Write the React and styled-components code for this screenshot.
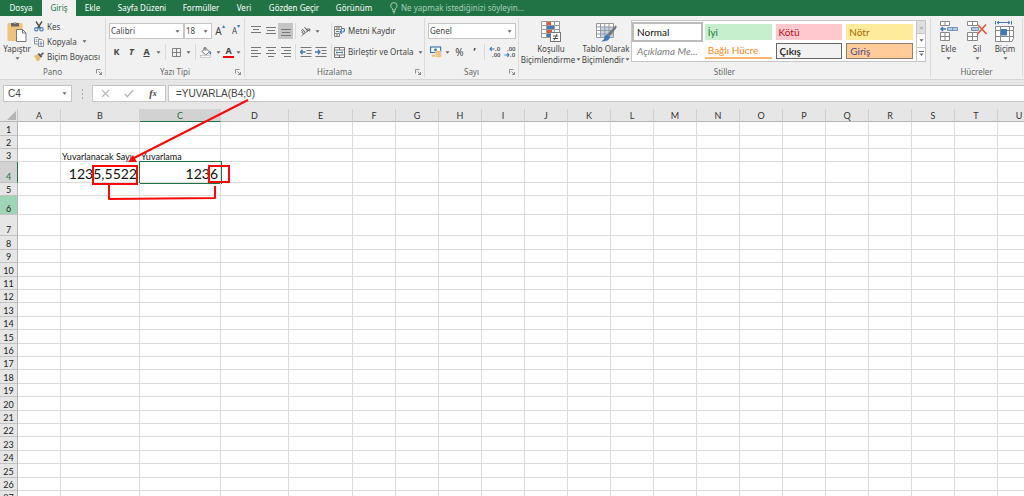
import React from "react";
import styled, { createGlobalStyle } from "styled-components";

const TABS = [
  { name: "Dosya", width: 42 },
  { name: "Giriş", width: 34, active: true },
  { name: "Ekle", width: 33 },
  { name: "Sayfa Düzeni", width: 66 },
  { name: "Formüller", width: 52 },
  { name: "Veri", width: 34 },
  { name: "Gözden Geçir", width: 66 },
  { name: "Görünüm", width: 54 },
];

const STYLES = [
  { name: "Normal", kind: "normal" },
  { name: "İyi", kind: "good" },
  { name: "Kötü", kind: "bad" },
  { name: "Nötr", kind: "neutral" },
  { name: "Açıklama Me...", kind: "note" },
  { name: "Bağlı Hücre", kind: "linked" },
  { name: "Çıkış", kind: "output" },
  { name: "Giriş", kind: "input" },
];

const COLUMNS = "ABCDEFGHIJKLMNOPQRSTU".split("");
const COLUMN_WIDTHS = { B: 79, C: 81, D: 68, E: 64 };
const ROW_HEIGHTS = { 1: 14, 4: 21, 6: 19, 7: 21 };
const ROWS = Array.from({ length: 27 }, (_, i) => i + 1);

const CELLS = {
  B3: "Yuvarlanacak Sayı",
  C3: "Yuvarlama",
  B4: "1235,5522",
  C4: "1236",
};

const rowHeight = (n) =>
  ROW_HEIGHTS[n] || (n > 7 && (n % 5 === 0 || n % 5 === 3) ? 14 : 13);

const Arrow = () => (
  <ArrowSvg viewBox="0 0 5 3" aria-hidden="true">
    <path d="M0.5 0.3h4L2.5 2.8z" fill="#666" />
  </ArrowSvg>
);

const Launcher = () => (
  <LaunchButton aria-label="Diğer seçenekler">
    <svg width="6" height="6" viewBox="0 0 6 6" fill="none" stroke="#777">
      <path d="M0.5 4.5v-4h4M2.5 2.5l3 3M5.5 3v2.5H3" strokeWidth="0.8" />
    </svg>
  </LaunchButton>
);

const PasteIcon = () => (
  <svg width="20" height="22" viewBox="0 0 20 22">
    <rect x="0.5" y="2" width="15" height="18" rx="1" fill="#eec47c" />
    <path d="M4 2h2.5a1.6 1.6 0 0 1 3 0H12v3.5H4z" fill="#666" />
    <circle cx="8" cy="2" r="0.8" fill="#eee" />
    <path d="M9.5 8.5h6l3.5 3.5v8.5H9.5z" fill="#fff" stroke="#777" />
    <path d="M15.5 8.5V12H19" fill="none" stroke="#777" />
  </svg>
);

const CutIcon = () => (
  <svg width="10" height="11" viewBox="0 0 10 11" fill="none">
    <path d="M2 0.5l4.5 7M8 0.5L3.5 7.5" stroke="#555" strokeWidth="1.4" />
    <circle cx="2.3" cy="8.3" r="1.7" stroke="#3f7ab8" strokeWidth="1.1" />
    <circle cx="7.5" cy="8.3" r="1.7" stroke="#3f7ab8" strokeWidth="1.1" />
  </svg>
);

const CopyIcon = () => (
  <svg width="10" height="10" viewBox="0 0 10 10" fill="#fff" stroke="#777" strokeWidth="0.8">
    <path d="M0.5 0.5h3.5l1.5 1.5v5h-5z" />
    <path d="M4.5 2.5H8l1.5 1.5v5.5h-5z" />
    <path d="M1.5 2.8h2M1.5 4.5h2M5.6 5h2.6M5.6 6.5h2.6M5.6 8h2.6" stroke="#3f7ab8" />
  </svg>
);

const BrushIcon = () => (
  <svg width="10" height="10" viewBox="0 0 10 10">
    <path d="M0 3.8l3.6-1.4 3.2 3.4L4.6 9.6 2.8 8.8z" fill="#ecba70" />
    <path d="M3.6 2.2l3.4 3.6 1.3-1.3L5 1z" fill="#555" />
    <path d="M6 2.6L9 0.2l1 1.3-2.6 2.6z" fill="#666" />
  </svg>
);

const BordersIcon = () => (
  <svg width="9" height="9" viewBox="0 0 9 9" fill="none" stroke="#666">
    <path d="M0.5 0.5h8v8h-8zM4.5 0.5v8M0.5 4.5h8" strokeWidth="0.8" />
  </svg>
);

const FillIcon = () => (
  <svg width="12" height="11" viewBox="0 0 12 11">
    <path d="M2 4.5L5.5 1l4 3.8L5.8 8z" fill="#fff" stroke="#666" strokeWidth="0.9" />
    <path d="M4 3.5V0.6h1.8V4" fill="none" stroke="#666" strokeWidth="0.8" />
    <path d="M9.5 3.5q2.3 1.5 1.6 4.3Q9 7.5 9.5 3.5" fill="#3f7ab8" />
    <rect x="0.5" y="8.7" width="10" height="1.8" fill="#fafafa" stroke="#aaa" strokeWidth="0.5" />
  </svg>
);

const LinesIcon = ({ d }) => (
  <svg width="10" height="10" viewBox="0 0 10 10" fill="none" stroke="#777" aria-hidden="true">
    <path d={d} />
  </svg>
);

const RotateIcon = () => (
  <svg width="12" height="11" viewBox="0 0 12 11" fill="none" stroke="#666">
    <path d="M1.5 9.8L10 3M10 3H7.3M10 3L9.5 5.5" strokeWidth="0.9" />
    <path d="M1.2 4.5q1.3-2 2.8 0l1 1.5M3.5 5a1.2 1.2 0 1 0 1 1.5M4.5 1l3 4M6 3.5a1.2 1.2 0 1 1 1.2 2" />
  </svg>
);

const IndentIcon = ({ flip }) => (
  <svg width="12" height="10" viewBox="0 0 12 10" fill="none">
    <path d="M0.5 0.5h11M6.5 3.5h5M6.5 6.5h5M0.5 9.5h11" stroke="#777" />
    <path
      d={flip ? "M0 5h5M3 2.8L5 5 3 7.2" : "M5.5 5h-5M2.5 2.8L0.5 5l2 2.2"}
      stroke="#3f7ab8"
      strokeWidth="1.3"
    />
  </svg>
);

const WrapIcon = () => (
  <svg width="11" height="11" viewBox="0 0 11 11" fill="none">
    <path d="M0.5 0.5h7v3h-7zM0.5 7.5h5v3h-5zM0.5 3.5v4" stroke="#777" strokeWidth="0.9" />
    <path d="M2 2h4M2 5.5h3M2 9h2" stroke="#777" />
    <path d="M8 2.5h1.5q1 0 1 1.6T9.2 6H6M7.7 4.2L6 6l1.7 1.8" stroke="#3f7ab8" strokeWidth="1.2" />
  </svg>
);

const MergeIcon = () => (
  <svg width="11" height="11" viewBox="0 0 11 11" fill="#fff" stroke="#666" strokeWidth="0.9">
    <path d="M0.5 0.5h10v10h-10zM0.5 3h10M0.5 8h10M5.5 0.5V3M5.5 8v2.5" />
    <path d="M2 5.5h7M3.3 4.3L2 5.5l1.3 1.2M7.7 4.3L9 5.5 7.7 6.7" stroke="#3f7ab8" />
  </svg>
);

const CurrencyIcon = () => (
  <svg width="12" height="12" viewBox="0 0 12 12">
    <rect x="0.6" y="1" width="10" height="5.5" fill="#fff" stroke="#3f7ab8" strokeWidth="1.2" />
    <circle cx="5.5" cy="3.7" r="1.5" fill="#3f7ab8" />
    <g fill="#ecba70" stroke="#f1f1f1" strokeWidth="0.4">
      <ellipse cx="8.3" cy="9.8" rx="3.2" ry="1.5" />
      <ellipse cx="8.3" cy="7.9" rx="3.2" ry="1.5" />
      <ellipse cx="8.3" cy="6" rx="3.2" ry="1.5" />
      <ellipse cx="3.5" cy="9.8" rx="2.2" ry="1.2" />
    </g>
  </svg>
);

const DecimalIcon = ({ more }) => (
  <svg width="12" height="12" viewBox="0 0 12 12" fontSize="6" fontWeight="600" fill="#555">
    <text x={more ? 6 : 3} y="5">{more ? ",0" : ",00"}</text>
    <text x={more ? 3 : 6} y="11">{more ? ",00" : ",0"}</text>
    <path
      d={more ? "M5.5 3H1M2.7 1.2L1 3l1.7 1.8" : "M0.5 9H5M3.3 7.2L5 9 3.3 10.8"}
      fill="none"
      stroke="#3f7ab8"
      strokeWidth="1.1"
    />
  </svg>
);

const ConditionalIcon = () => (
  <svg width="20" height="22" viewBox="0 0 20 22">
    <path d="M0.5 0.5h18v16h-18zM5.5 0.5v16M13.5 0.5v16M0.5 4.5h18M0.5 8.5h18M0.5 12.5h18" fill="#fff" stroke="#999" />
    <path d="M6 1h4v3H6zM6 9h5v3H6z" fill="#dd5a3c" />
    <path d="M6 5h7v3H6zM6 13h3v3H6z" fill="#3f7ab8" />
    <rect x="9.5" y="11.5" width="10" height="9" fill="#fff" stroke="#777" />
    <path d="M11.8 15h5.4M11.8 17.5h5.4M16 13l-3 6.5" stroke="#444" strokeWidth="0.9" />
  </svg>
);

const TableIcon = () => (
  <svg width="21" height="22" viewBox="0 0 21 22">
    <path d="M0.5 2.5h17v14h-17z" fill="#fff" />
    <path d="M4.5 6h13v10.5h-13z" fill="#c3d5e8" />
    <path d="M0.5 2.5h17v14h-17zM4.5 2.5v14M8.8 2.5v14M13 2.5v14M0.5 6h17M0.5 9.5h17M0.5 13h17" fill="none" stroke="#999" />
    <path d="M19.5 4.5q2 0.5 0.5 3l-6.5 8-2.5-2z" fill="#777" />
    <path d="M11 13.5l3 2.5q-0.5 4.5-9 4.5 3.5-2 3.5-4.5 1-2.5 2.5-2.5z" fill="#3f7ab8" />
  </svg>
);

const InsertCellsIcon = () => (
  <svg width="19" height="22" viewBox="0 0 19 22" fill="#fff" stroke="#888">
    <path d="M1.5 0.5h9v4h-9zM6 0.5v4M1.5 11.5h9v8h-9zM6 11.5v8M1.5 15.5h9" />
    <path d="M8.5 6.5h10v3h-10zM13.5 6.5v3" fill="#b8cde3" stroke="#7195b8" />
    <path d="M7 8H2M4 6L2 8l2 2" fill="none" stroke="#3f7ab8" strokeWidth="1.5" />
  </svg>
);

const DeleteCellsIcon = () => (
  <svg width="20" height="22" viewBox="0 0 20 22" fill="#fff" stroke="#888">
    <path d="M0.5 0.5h10v4h-10zM5.5 0.5v4M0.5 11.5h10v8h-10zM5.5 11.5v8M0.5 15.5h10" />
    <path d="M4.5 6.5h7v3h-7z" fill="#b8cde3" stroke="#7195b8" />
    <path d="M11 4l8.5 9M19 3.5l-8.5 9.5" stroke="#dd5a3c" strokeWidth="1.6" />
  </svg>
);

const FormatCellsIcon = () => (
  <svg width="20" height="22" viewBox="0 0 20 22" fill="none" stroke="#888">
    <path d="M0.5 5.5h18v12L17 20.5H0.5zM5.5 5.5v15M14.5 5.5v15M0.5 9.5h18M0.5 15.5h18" fill="#fff" />
    <path d="M6 8h6v6.5H6z" fill="#3f7ab8" stroke="none" />
    <path d="M2 1.5h13M4 0L2 1.5 4 3M13 0l2 1.5L13 3M0.5 0v3.5M16.5 0v3.5" stroke="#3f7ab8" />
  </svg>
);

const ALIGN = {
  top: "M0 0.5h10M2 3.5h6M0 6.5h10",
  middle: "M0 1.5h10M1 4.5h8M0 7.5h10",
  bottom: "M0 3.5h10M1 6.5h8M0 9.5h10",
  left: "M0 0.5h10M0 3.5h7M0 6.5h10M0 9.5h7",
  center: "M0 0.5h10M2 3.5h6M0 6.5h10M2 9.5h6",
  right: "M0 0.5h10M3 3.5h7M0 6.5h10M3 9.5h7",
};

const Dropdown = ({ label, value, width }) => (
  <SelectBox $width={width}>
    <select aria-label={label} defaultValue={value}>
      <option>{value}</option>
    </select>
    <Arrow />
  </SelectBox>
);

const Group = ({ title, width, launcher, grow, children }) => (
  <GroupBox $width={width} $grow={grow}>
    <GroupBody>{children}</GroupBody>
    <GroupFooter>
      <span>{title}</span>
      {launcher && <Launcher />}
    </GroupFooter>
  </GroupBox>
);

const Ribbon = () => (
  <RibbonBar>
    <Group title="Pano" width={106} launcher>
      <BigButton $width={34}>
        <PasteIcon />
        <span>Yapıştır</span>
        <Arrow />
      </BigButton>
      <Stack>
        <TextButton>
          <CutIcon />
          Kes
        </TextButton>
        <TextButton>
          <CopyIcon />
          Kopyala
          <Arrow />
        </TextButton>
        <TextButton>
          <BrushIcon />
          Biçim Boyacısı
        </TextButton>
      </Stack>
    </Group>

    <Group title="Yazı Tipi" width={139} launcher>
      <Lines>
        <Line>
          <Dropdown label="Yazı tipi" value="Calibri" width={75} />
          <Dropdown label="Yazı boyutu" value="18" width={28} />
          <Tool $width={16} $size={10} aria-label="Yazıyı büyüt">
            A<Caret>▴</Caret>
          </Tool>
          <Tool $width={16} $size={8} aria-label="Yazıyı küçült">
            A<Caret>▾</Caret>
          </Tool>
        </Line>
        <Line>
          <Tool $width={15} $bold>K</Tool>
          <Tool $width={15} $bold $italic>T</Tool>
          <Tool $width={15} $bold $underline>A</Tool>
          <ArrowButton aria-label="Altı çizili seçenekleri"><Arrow /></ArrowButton>
          <Divider />
          <Tool $width={16} aria-label="Kenarlıklar"><BordersIcon /></Tool>
          <ArrowButton aria-label="Kenarlık seçenekleri"><Arrow /></ArrowButton>
          <Divider />
          <Tool $width={16} aria-label="Dolgu rengi"><FillIcon /></Tool>
          <ArrowButton aria-label="Dolgu seçenekleri"><Arrow /></ArrowButton>
          <ColorTool aria-label="Yazı tipi rengi">A</ColorTool>
          <ArrowButton aria-label="Renk seçenekleri"><Arrow /></ArrowButton>
        </Line>
      </Lines>
    </Group>

    <Group title="Hizalama" width={180} launcher>
      <Lines>
        <Line>
          <Tool $width={15} aria-label="Üste hizala"><LinesIcon d={ALIGN.top} /></Tool>
          <Tool $width={15} aria-label="Ortaya hizala"><LinesIcon d={ALIGN.middle} /></Tool>
          <Tool $width={15} $active aria-label="Alta hizala"><LinesIcon d={ALIGN.bottom} /></Tool>
          <Divider />
          <Tool $width={15} aria-label="Yönlendirme"><RotateIcon /></Tool>
          <ArrowButton aria-label="Yönlendirme seçenekleri"><Arrow /></ArrowButton>
          <Spacer $width={7} />
          <Divider />
          <TextButton>
            <WrapIcon />
            Metni Kaydır
          </TextButton>
        </Line>
        <Line>
          <Tool $width={15} aria-label="Sola hizala"><LinesIcon d={ALIGN.left} /></Tool>
          <Tool $width={15} aria-label="Ortala"><LinesIcon d={ALIGN.center} /></Tool>
          <Tool $width={15} aria-label="Sağa hizala"><LinesIcon d={ALIGN.right} /></Tool>
          <Divider />
          <Tool $width={15} aria-label="Girintiyi azalt"><IndentIcon /></Tool>
          <Tool $width={15} aria-label="Girintiyi artır"><IndentIcon flip /></Tool>
          <Spacer $width={1} />
          <Divider />
          <TextButton>
            <MergeIcon />
            Birleştir ve Ortala
            <Arrow />
          </TextButton>
        </Line>
      </Lines>
    </Group>

    <Group title="Sayı" width={94} launcher>
      <Lines>
        <Line>
          <Dropdown label="Sayı biçimi" value="Genel" width={88} />
        </Line>
        <Line>
          <Tool $width={15} aria-label="Finansal biçim"><CurrencyIcon /></Tool>
          <ArrowButton aria-label="Para birimi seçenekleri"><Arrow /></ArrowButton>
          <Tool $width={15} $size={10}>%</Tool>
          <Tool $width={15} $size={10} $bold>’</Tool>
          <Divider />
          <Tool $width={15} aria-label="Ondalık artır"><DecimalIcon more /></Tool>
          <Tool $width={15} aria-label="Ondalık azalt"><DecimalIcon /></Tool>
        </Line>
      </Lines>
    </Group>

    <Group title="Stiller" width={412} grow>
      <BigButton $width={64}>
        <ConditionalIcon />
        <span>Koşullu</span>
        <ButtonText>Biçimlendirme<Arrow /></ButtonText>
      </BigButton>
      <BigButton $width={46}>
        <TableIcon />
        <span>Tablo Olarak</span>
        <ButtonText>Biçimlendir<Arrow /></ButtonText>
      </BigButton>
      <Gallery>
        <GalleryGrid>
          {STYLES.map((ele) => (
            <StyleCell key={ele.name + ele.kind} $kind={ele.kind}>
              {ele.name}
            </StyleCell>
          ))}
        </GalleryGrid>
        <GalleryScroll>
          <button aria-label="Yukarı" disabled>
            <svg width="5" height="3" viewBox="0 0 5 3"><path d="M0.5 2.7h4L2.5 0.3z" fill="#aaa" /></svg>
          </button>
          <button aria-label="Aşağı"><Arrow /></button>
          <button aria-label="Diğer">
            <svg width="5" height="6" viewBox="0 0 5 6"><path d="M0 0.5h5" stroke="#666" /><path d="M0.5 2.5h4L2.5 5z" fill="#666" /></svg>
          </button>
        </GalleryScroll>
      </Gallery>
    </Group>

    <Group title="Hücreler" width={92}>
      <CellTools>
        <BigButton $width={29}><InsertCellsIcon /><span>Ekle</span><Arrow /></BigButton>
        <BigButton $width={28}><DeleteCellsIcon /><span>Sil</span><Arrow /></BigButton>
        <BigButton $width={28}><FormatCellsIcon /><span>Biçim</span><Arrow /></BigButton>
      </CellTools>
    </Group>
  </RibbonBar>
);

const FormulaRow = () => (
  <FormulaBar>
    <NameBox>
      <input aria-label="Ad kutusu" defaultValue="C4" />
      <Arrow />
    </NameBox>
    <Grip aria-hidden="true">
      <i />
      <i />
      <i />
    </Grip>
    <FormulaButtons>
      <button aria-label="İptal">
        <svg width="9" height="9" viewBox="0 0 9 9"><path d="M1 1l7 7M8 1L1 8" stroke="#bbb" strokeWidth="1.2" /></svg>
      </button>
      <button aria-label="Gir">
        <svg width="10" height="9" viewBox="0 0 10 9"><path d="M0.8 5l2.5 2.7L9.2 1" fill="none" stroke="#bbb" strokeWidth="1.5" /></svg>
      </button>
      <FxButton aria-label="İşlev ekle">
        f<sub>x</sub>
      </FxButton>
    </FormulaButtons>
    <FormulaInput aria-label="Formül çubuğu" defaultValue="=YUVARLA(B4;0)" />
  </FormulaBar>
);

const Sheet = () => (
  <SheetTable>
    <colgroup>
      <Col $width={18} />
      {COLUMNS.map((c) => (
        <Col key={c} $width={COLUMN_WIDTHS[c] || 43} />
      ))}
    </colgroup>
    <thead>
      <tr>
        <Corner aria-label="Tümünü seç">
          <svg width="9" height="9" viewBox="0 0 9 9"><path d="M9 0v9H0z" fill="#b4b4b4" /></svg>
        </Corner>
        {COLUMNS.map((c) => (
          <ColumnHead key={c} scope="col" $selected={c === "C"}>
            {c}
          </ColumnHead>
        ))}
      </tr>
    </thead>
    <tbody>
      {ROWS.map((n) => (
        <Row key={n} $height={rowHeight(n)}>
          <RowHead scope="row" $selected={n === 4} $hover={n === 6}>
            {n}
          </RowHead>
          {COLUMNS.map((c) => (
            <Cell key={c} $big={n === 4} $selected={c + n === "C4"}>
              {CELLS[c + n] && <span>{CELLS[c + n]}</span>}
            </Cell>
          ))}
        </Row>
      ))}
    </tbody>
  </SheetTable>
);

const Annotations = () => (
  <Overlay width="260" height="210" viewBox="0 0 260 210" fill="none" stroke="#f90808" strokeWidth="2" aria-hidden="true">
    <path d="M248 100L134 158" />
    <path d="M128 162l5-7 4 7z" fill="#f90808" stroke="none" />
    <path d="M93 166h44v18H93zM209 166h20v16h-20z" />
    <path d="M109 185v14l106-1v-12" strokeLinejoin="round" />
  </Overlay>
);

const App = () => {
  return (
    <Page>
      <GlobalStyle />
      <TabBar>
        {TABS.map((tab) => (
          <Tab key={tab.name} $width={tab.width} $active={tab.active}>
            {tab.name}
          </Tab>
        ))}
        <TellMe>
          <svg width="8" height="12" viewBox="0 0 8 12" fill="none" stroke="#b5d6c3">
            <path d="M2.5 8V6.8Q0.7 5.5 0.7 3.8a3.2 3.2 0 0 1 6.4 0Q7.1 5.5 5.3 6.8V8zM2.5 9.5h2.8M3 11h1.8" strokeWidth="0.9" />
          </svg>
          <input aria-label="Ne yapmak istediğinizi söyleyin" placeholder="Ne yapmak istediğinizi söyleyin..." />
        </TellMe>
      </TabBar>
      <Ribbon />
      <FormulaRow />
      <Sheet />
      <Annotations />
    </Page>
  );
};

export default App;

const GlobalStyle = createGlobalStyle`
  * {
    box-sizing: border-box;
  }
  body {
    margin: 0;
    background: #fff;
  }
  #root {
    height: 100vh;
    overflow: hidden;
  }
  button, input, select {
    font: inherit;
    color: inherit;
    border: 0;
    padding: 0;
    margin: 0;
    background: none;
    border-radius: 0;
  }
  svg {
    flex: none;
  }
`;

const Page = styled.div`
  position: relative;
  font-family: "Noto Sans", "Open Sans", sans-serif;
  font-size: 8px;
  line-height: 10px;
  color: #444;
`;

const ArrowSvg = styled.svg`
  width: 5px;
  height: 3px;
`;

const TabBar = styled.nav`
  display: flex;
  height: 16px;
  background: #217346;
`;

const Tab = styled.button`
  width: ${(p) => p.$width}px;
  white-space: nowrap;
  text-align: center;
  color: ${(p) => (p.$active ? "#217346" : "#fff")};
  background: ${(p) => (p.$active ? "#f1f1f1" : "none")};
`;

const TellMe = styled.label`
  display: flex;
  align-items: center;
  gap: 3px;
  flex: 1;
  padding-left: 9px;
  input {
    flex: 1;
    color: #fff;
  }
  input::placeholder {
    color: #a9cfb9;
    opacity: 1;
  }
`;

const RibbonBar = styled.div`
  display: flex;
  padding: 2px 1px 2px 0;
  background: #f1f1f1;
  border-bottom: 1px solid #d5d5d5;
`;

const GroupBox = styled.section`
  display: flex;
  flex-direction: column;
  flex: ${(p) => (p.$grow ? 1 : 0)} 0 ${(p) => p.$width}px;
  min-width: 0;
  height: 59px;
  border-right: 1px solid #dadada;
`;

const GroupBody = styled.div`
  display: flex;
  flex: 1;
`;

const GroupFooter = styled.div`
  display: grid;
  grid-template-columns: 12px 1fr 12px;
  align-items: center;
  height: 10px;
  color: #666;
  span {
    grid-column: 2;
    text-align: center;
  }
`;

const LaunchButton = styled.button`
  display: flex;
  padding-left: 3px;
`;

const BigButton = styled.button`
  display: flex;
  flex-direction: column;
  align-items: center;
  width: ${(p) => p.$width}px;
  padding-top: 3px;
  white-space: nowrap;
  line-height: 11px;
  > svg:last-child {
    margin-top: 3px;
  }
`;

const ButtonText = styled.span`
  display: flex;
  align-items: center;
  gap: 1px;
`;

const Stack = styled.div`
  display: flex;
  flex-direction: column;
  padding-top: 1px;
`;

const TextButton = styled.button`
  display: flex;
  align-items: center;
  gap: 3px;
  height: 15px;
  white-space: nowrap;
  ${ArrowSvg} {
    margin-left: 2px;
  }
`;

const Lines = styled.div`
  display: flex;
  flex-direction: column;
  gap: 5px;
  padding: 5px 0 0 3px;
`;

const Line = styled.div`
  display: flex;
  align-items: center;
  height: 16px;
`;

const Spacer = styled.span`
  width: ${(p) => p.$width}px;
`;

const SelectBox = styled.span`
  display: grid;
  grid-template-columns: 1fr 8px;
  align-items: center;
  width: ${(p) => p.$width}px;
  height: 16px;
  background: #fff;
  border: 1px solid #c6c6c6;
  select {
    grid-area: 1 / 1 / 2 / 3;
    width: 100%;
    padding-left: 1px;
    appearance: none;
  }
  ${ArrowSvg} {
    grid-area: 1 / 2;
    pointer-events: none;
  }
`;

const Tool = styled.button`
  display: flex;
  align-items: center;
  justify-content: center;
  width: ${(p) => p.$width}px;
  height: 16px;
  font-size: ${(p) => p.$size || 9}px;
  font-weight: ${(p) => (p.$bold ? 700 : 400)};
  font-style: ${(p) => (p.$italic ? "italic" : "normal")};
  text-decoration: ${(p) => (p.$underline ? "underline" : "none")};
  background: ${(p) => (p.$active ? "#c5c5c5" : "none")};
`;

const Caret = styled.sup`
  font-size: 6px;
  line-height: 6px;
  align-self: flex-start;
  color: #3f7ab8;
`;

const ColorTool = styled.button`
  width: 11px;
  height: 12px;
  font-size: 9px;
  font-weight: 700;
  border-bottom: 2px solid #f00;
`;

const ArrowButton = styled.button`
  display: flex;
  align-items: center;
  justify-content: center;
  width: 9px;
  height: 16px;
`;

const Divider = styled.span`
  width: 1px;
  height: 16px;
  margin: 0 2px;
  background: #dadada;
`;

const Gallery = styled.div`
  display: flex;
  flex: 1;
  height: 42px;
  margin: 2px 4px 0 2px;
  background: #fff;
  border: 1px solid #c6c6c6;
`;

const GalleryGrid = styled.div`
  display: grid;
  flex: 1;
  grid-template-columns: repeat(4, minmax(0, 1fr));
  grid-template-rows: 16px 16px;
  gap: 3px 4px;
  padding: 3px 3px 0 2px;
`;

const styleKinds = {
  normal: "color: #111; outline: 2px solid #bbb;",
  good: "color: #1c7a2c; background: #c6efce;",
  bad: "color: #b01020; background: #ffc7ce;",
  neutral: "color: #a66a00; background: #ffeb9c;",
  note: "color: #808080; font-style: italic;",
  linked: "color: #fa8a1a; border-bottom: 2px solid #fbb870;",
  output: "color: #333; font-weight: 700; background: #f2f2f2; border: 1px solid #666;",
  input: "color: #4f4a84; background: #ffcc99; border: 1px solid #8f8170;",
};

const StyleCell = styled.button`
  && {
    padding: 0 3px;
  }
  font-family: Lato, sans-serif;
  font-size: 10px;
  text-align: left;
  white-space: nowrap;
  overflow: hidden;
  ${(p) => styleKinds[p.$kind]}
`;

const GalleryScroll = styled.div`
  display: grid;
  grid-template-rows: repeat(3, 1fr);
  width: 9px;
  border-left: 1px solid #c6c6c6;
  button {
    display: flex;
    align-items: center;
    justify-content: center;
    border-bottom: 1px solid #c6c6c6;
  }
  button:disabled {
    background: #dedede;
  }
  button:last-child {
    border-bottom: 0;
  }
`;

const CellTools = styled.div`
  display: flex;
  padding-left: 3px;
`;

const FormulaBar = styled.div`
  display: flex;
  height: 29px;
  padding: 5px 0 7px 3px;
  background: #e6e6e6;
  font-family: "Liberation Sans", sans-serif;
  font-size: 10px;
`;

const NameBox = styled.div`
  display: flex;
  align-items: center;
  width: 69px;
  padding: 0 4px;
  background: #fff;
  border: 1px solid #c6c6c6;
  input {
    flex: 1;
    min-width: 0;
  }
`;

const Grip = styled.span`
  display: flex;
  flex-direction: column;
  align-items: center;
  justify-content: center;
  gap: 2px;
  width: 20px;
  i {
    width: 1px;
    height: 2px;
    background: #aaa;
  }
`;

const FormulaButtons = styled.div`
  display: grid;
  grid-template-columns: repeat(3, 1fr);
  width: 74px;
  background: #fff;
  border: 1px solid #c6c6c6;
  button {
    display: flex;
    align-items: center;
    justify-content: center;
  }
`;

const FxButton = styled.button`
  font-family: "Liberation Serif", serif;
  font-style: italic;
  font-weight: 700;
  sub {
    font-size: 8px;
  }
`;

const FormulaInput = styled.input`
  flex: 1;
  min-width: 0;
  margin-left: 2px;
  padding-left: 7px;
  background: #fff;
  border: 1px solid #c6c6c6;
  border-right: 0;
`;

const SheetTable = styled.table`
  table-layout: fixed;
  width: 1041px;
  min-width: 100%;
  border-collapse: separate;
  border-spacing: 0;
  font-family: Lato, sans-serif;
  font-size: 9px;
  line-height: 9px;
  color: #111;
  th, td {
    padding: 0;
  }
`;

const Col = styled.col`
  width: ${(p) => p.$width}px;
`;

const Row = styled.tr`
  height: ${(p) => p.$height}px;
`;

const Corner = styled.td`
  height: 13px;
  background: #e6e6e6;
  border-right: 1px solid #c6c6c6;
  border-bottom: 1px solid #b5b5b5;
  svg {
    display: block;
    margin: 0 1px 0 auto;
  }
`;

const ColumnHead = styled.th`
  height: 13px;
  font-weight: 400;
  color: ${(p) => (p.$selected ? "#217346" : "#333")};
  background: ${(p) => (p.$selected ? "#d2d2d2" : "#e6e6e6")};
  border-right: 1px solid #cfcfcf;
  border-bottom: 1px solid ${(p) => (p.$selected ? "#217346" : "#b5b5b5")};
`;

const RowHead = styled.th`
  && {
    padding-bottom: 1px;
  }
  font-weight: 400;
  vertical-align: bottom;
  background: ${(p) => (p.$selected ? "#d2d2d2" : p.$hover ? "#9fd5b7" : "#e6e6e6")};
  color: ${(p) => (p.$selected ? "#217346" : "#222")};
  border-right: 1px solid ${(p) => (p.$selected ? "#217346" : "#b5b5b5")};
  border-bottom: 1px solid #c2c2c2;
`;

const Cell = styled.td`
  position: relative;
  text-align: ${(p) => (p.$big ? "right" : "left")};
  vertical-align: bottom;
  font-size: ${(p) => (p.$big ? 14 : 9)}px;
  line-height: ${(p) => (p.$big ? 16 : 9)}px;
  white-space: nowrap;
  border-right: 1px solid #dcdcdc;
  border-bottom: 1px solid #dcdcdc;
  outline: ${(p) => (p.$selected ? "1px solid #217346" : "none")};
  &::after {
    content: "";
    display: ${(p) => (p.$selected ? "block" : "none")};
    position: absolute;
    right: -2px;
    bottom: -2px;
    width: 3px;
    height: 3px;
    background: #217346;
  }
  span {
    display: block;
    padding: 0 ${(p) => (p.$big ? 2 : 1)}px;
  }
`;

const Overlay = styled.svg`
  position: absolute;
  top: 0;
  left: 0;
  pointer-events: none;
`;
